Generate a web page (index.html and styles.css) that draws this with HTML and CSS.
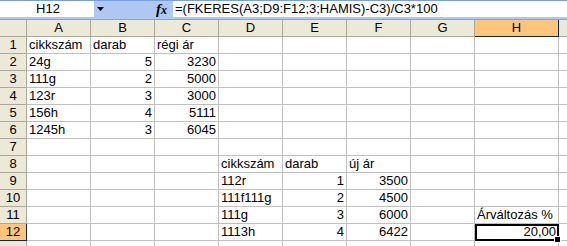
FILE: index.html
```html
<!DOCTYPE html>
<html lang="hu">
<head>
  <meta charset="UTF-8">
  <title>Munkafüzet - Árváltozás</title>
  <link rel="stylesheet" href="styles.css">
</head>
<body>

<div class="formula-bar">
  <div class="name-box">H12</div>
  <div class="name-drop">
    <svg width="8" height="4" viewBox="0 0 8 4"><path d="M0 0h7L3.5 4z" fill="#000"/></svg>
  </div>
  <div class="fx">f<span>x</span></div>
  <div class="formula">=(FKERES(A3;D9:F12;3;HAMIS)-C3)/C3*100</div>
</div>

<div class="sheet">
  <div class="row head">
    <div class="hd"></div>
    <div class="hd">A</div><div class="hd">B</div><div class="hd">C</div><div class="hd">D</div>
    <div class="hd">E</div><div class="hd">F</div><div class="hd">G</div><div class="hd sel">H</div><div class="hd"></div>
  </div>

  <div class="row">
    <div class="rh">1</div>
    <div class="c">cikkszám</div><div class="c">darab</div><div class="c">régi ár</div><div class="c"></div>
    <div class="c"></div><div class="c"></div><div class="c"></div><div class="c"></div><div class="c"></div>
  </div>
  <div class="row">
    <div class="rh">2</div>
    <div class="c">24g</div><div class="c num">5</div><div class="c num">3230</div><div class="c"></div>
    <div class="c"></div><div class="c"></div><div class="c"></div><div class="c"></div><div class="c"></div>
  </div>
  <div class="row">
    <div class="rh">3</div>
    <div class="c">111g</div><div class="c num">2</div><div class="c num">5000</div><div class="c"></div>
    <div class="c"></div><div class="c"></div><div class="c"></div><div class="c"></div><div class="c"></div>
  </div>
  <div class="row">
    <div class="rh">4</div>
    <div class="c">123r</div><div class="c num">3</div><div class="c num">3000</div><div class="c"></div>
    <div class="c"></div><div class="c"></div><div class="c"></div><div class="c"></div><div class="c"></div>
  </div>
  <div class="row">
    <div class="rh">5</div>
    <div class="c">156h</div><div class="c num">4</div><div class="c num">5111</div><div class="c"></div>
    <div class="c"></div><div class="c"></div><div class="c"></div><div class="c"></div><div class="c"></div>
  </div>
  <div class="row">
    <div class="rh">6</div>
    <div class="c">1245h</div><div class="c num">3</div><div class="c num">6045</div><div class="c"></div>
    <div class="c"></div><div class="c"></div><div class="c"></div><div class="c"></div><div class="c"></div>
  </div>
  <div class="row">
    <div class="rh">7</div>
    <div class="c"></div><div class="c"></div><div class="c"></div><div class="c"></div>
    <div class="c"></div><div class="c"></div><div class="c"></div><div class="c"></div><div class="c"></div>
  </div>
  <div class="row">
    <div class="rh">8</div>
    <div class="c"></div><div class="c"></div><div class="c"></div><div class="c">cikkszám</div>
    <div class="c">darab</div><div class="c">új ár</div><div class="c"></div><div class="c"></div><div class="c"></div>
  </div>
  <div class="row">
    <div class="rh">9</div>
    <div class="c"></div><div class="c"></div><div class="c"></div><div class="c">112r</div>
    <div class="c num">1</div><div class="c num">3500</div><div class="c"></div><div class="c"></div><div class="c"></div>
  </div>
  <div class="row">
    <div class="rh">10</div>
    <div class="c"></div><div class="c"></div><div class="c"></div><div class="c">111f111g</div>
    <div class="c num">2</div><div class="c num">4500</div><div class="c"></div><div class="c"></div><div class="c"></div>
  </div>
  <div class="row">
    <div class="rh">11</div>
    <div class="c"></div><div class="c"></div><div class="c"></div><div class="c">111g</div>
    <div class="c num">3</div><div class="c num">6000</div><div class="c"></div><div class="c">Árváltozás %</div><div class="c"></div>
  </div>
  <div class="row">
    <div class="rh sel">12</div>
    <div class="c"></div><div class="c"></div><div class="c"></div><div class="c">1113h</div>
    <div class="c num">4</div><div class="c num">6422</div><div class="c"></div><div class="c num active">20,00</div><div class="c"></div>
  </div>
  <div class="row">
    <div class="rh"></div>
    <div class="c"></div><div class="c"></div><div class="c"></div><div class="c"></div>
    <div class="c"></div><div class="c"></div><div class="c"></div><div class="c"></div><div class="c"></div>
  </div>
</div>

</body>
</html>
```

FILE: styles.css
```css
body {
  margin: 0;
  font-family: 'Liberation Sans', Arial, sans-serif;
  font-size: 13px;
  color: #000;
  background-color: #fff;
  overflow: hidden;
}

.formula-bar {
  display: flex;
  height: 20px;
  box-sizing: border-box;
  background-color: #aec8f2;
  border-top: 1px solid #7a9ee0;
  border-bottom: 1px solid #a0a0a0;
  padding-bottom: 2px;
}

.name-box {
  width: 94px;
  background-color: #fff;
  text-align: center;
  line-height: 16px;
  padding-left: 2px;
  box-sizing: border-box;
}

.name-drop {
  width: 20px;
  display: flex;
  align-items: center;
  justify-content: center;
  padding-right: 6px;
  box-sizing: border-box;
}

.fx {
  width: 59px;
  text-align: right;
  padding-right: 6px;
  box-sizing: border-box;
  font-family: 'Liberation Serif', serif;
  font-style: italic;
  font-weight: bold;
  font-size: 15px;
  line-height: 17px;
}

.fx span {
  font-size: 12px;
}

.formula {
  flex: 1;
  background-color: #fff;
  line-height: 16px;
  padding-left: 2px;
  white-space: nowrap;
}

.row {
  display: grid;
  grid-template-columns: 27px 64px 64px 64px 64px 64px 64px 64px 84px 20px;
  height: 17px;
}

.hd,
.rh {
  background-color: #ece9d8;
  border-right: 1px solid #aca899;
  border-bottom: 1px solid #aca899;
  box-sizing: border-box;
  text-align: center;
  line-height: 16px;
}

.sel {
  background-color: #ffc57a;
  border-right-color: #0a246a;
  border-bottom-color: #0a246a;
}

.c {
  border-right: 1px solid #c0c0c0;
  border-bottom: 1px solid #c0c0c0;
  box-sizing: border-box;
  line-height: 16px;
  padding: 0 2px;
  white-space: nowrap;
}

.num {
  text-align: right;
}

.active {
  position: relative;
  outline: 2px solid #000;
  outline-offset: -2px;
  border-color: #000;
}

.active::after {
  content: '';
  position: absolute;
  right: -3px;
  bottom: -3px;
  width: 5px;
  height: 5px;
  background-color: #000;
  border: 1px solid #fff;
}
```
